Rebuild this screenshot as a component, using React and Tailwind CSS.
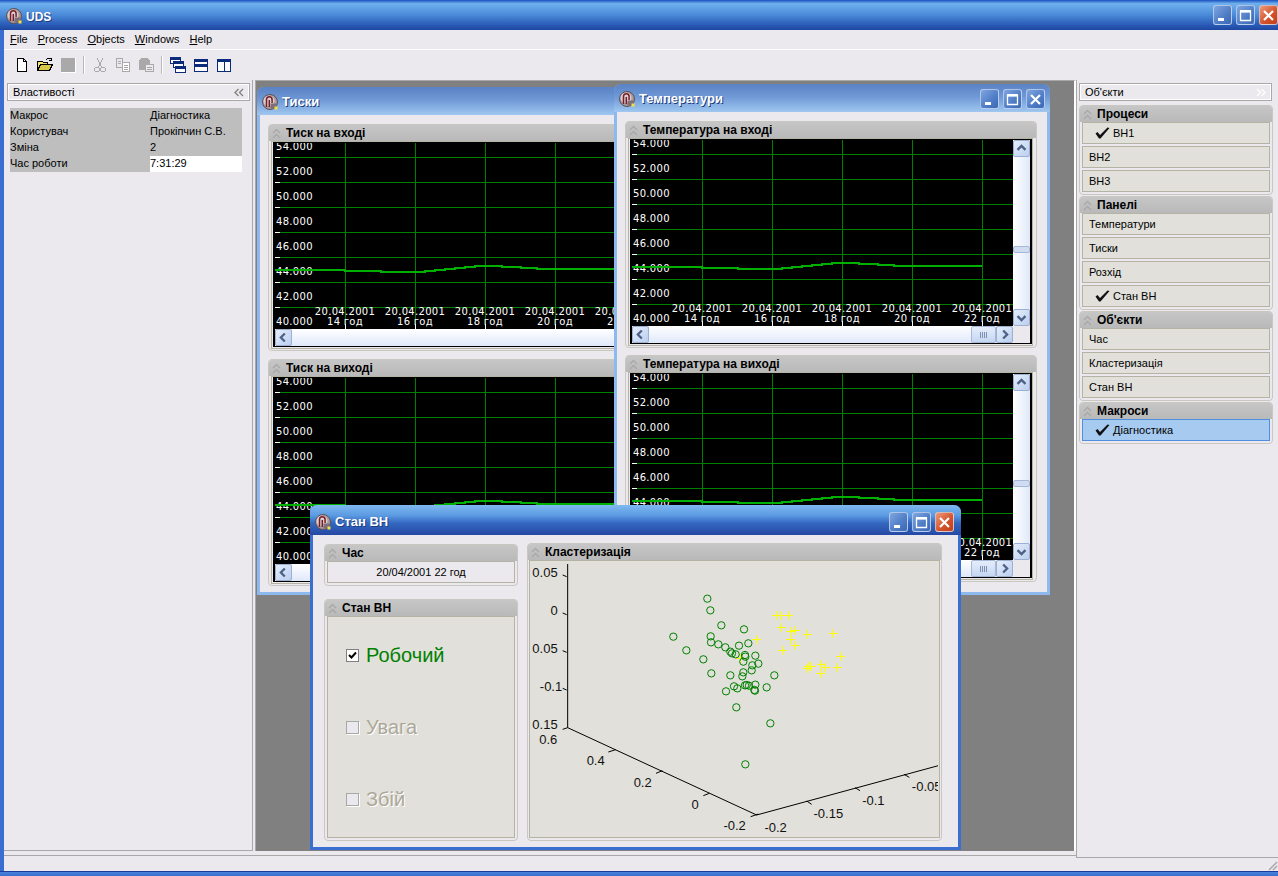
import React from 'react'

const yLabels = ['54.000', '52.000', '50.000', '48.000', '46.000', '44.000', '42.000', '40.000']
const gridY = [14, 39, 64, 89, 114, 139, 164]
const gridX = [70, 140, 210, 280, 350]
const hours = ['14', '16', '18', '20', '22']
const trend = '0,127 70,127 70,128 106,128 106,129 150,129 150,128 160,128 160,127 170,127 170,126 180,126 180,125 190,125 190,124 200,124 200,123 227,123 227,124 246,124 246,125 262,125 262,126 350,126'

const circles = [[547,176],[556,211],[589,256],[657,268],[445,290],[557,289],[558,307],[580,313],[601,322],[642,317],[670,310],[484,331],[616,335],[621,340],[632,343],[660,345],[661,350],[691,347],[535,358],[655,365],[682,376],[700,371],[680,391],[655,397],[652,409],[559,400],[616,406],[748,406],[627,439],[637,445],[603,454],[660,436],[665,435],[672,437],[691,434],[725,442],[688,450],[690,452],[634,502],[736,550],[661,673]]
const pluses = [[755,226],[768,226],[790,226],[768,263],[797,275],[810,270],[848,284],[925,280],[797,298],[811,315],[772,331],[693,298],[945,349],[848,385],[851,380],[858,378],[888,373],[900,382],[936,382],[886,400],[645,355]]
const plotTicks = [[113,105,125,110],[113,219,125,224],[113,332,125,337],[113,445,125,450],[113,568,128,563],[250,636,272,629],[393,700,412,692],[535,767,553,760],[677,830,700,822],[845,783,860,793],[990,743,1005,752],[1137,703,1153,712]]
const plotLabels = [['0.05',60,111],['0',87,225],['0.05',60,339],['-0.1',78,452],['0.15',60,566],['0.6',70,611],['0.4',212,674],['0.2',353,740],['0',510,806],['-0.2',629,869],['-0.2',752,875],['-0.15',910,834],['-0.1',1045,794],['-0.05',1205,754]]

const objectGroups = [
    { title: 'Процеси', items: [{ name: 'ВН1', checked: true }, { name: 'ВН2' }, { name: 'ВН3' }] },
    { title: 'Панелі', items: [{ name: 'Температури' }, { name: 'Тиски' }, { name: 'Розхід' }, { name: 'Стан ВН', checked: true }] },
    { title: "Об'єкти", items: [{ name: 'Час' }, { name: 'Кластеризація' }, { name: 'Стан ВН' }] },
    { title: 'Макроси', items: [{ name: 'Діагностика', checked: true, selected: true }] },
]

// plot coords are 3x screen pixels, snap so a 1px stroke stays sharp
const snapX = x => Math.round((x - 16.5) / 3) * 3 + 16.5
const snapY = y => Math.round((y - 64.5) / 3) * 3 + 64.5

const Logo = () => (
    <svg width="16" height="16" viewBox="0 0 16 16" className="shrink-0">
        <circle cx="8" cy="8" r="7.5" fill="#a89a9a" stroke="#5e5054" />
        <circle cx="7" cy="7" r="5.5" fill="#d8d0d0" />
        <path d="M4.500 13V5.500a2.800 2.800 0 0 1 5.600 0V9M7.300 13V6" fill="none" stroke="#7a1b2a" strokeWidth="1.500" />
        <rect x="8.500" y="9.500" width="6" height="5" fill="#7d6f78" />
        <rect x="12.500" y="12.500" width="3" height="3" fill="#f5e040" />
    </svg>
)

const TitleBtn = ({ kind, tone }) => {
    const toneClass = tone === 'red'
        ? 'bg-[linear-gradient(135deg,#ee9a78,#d2502a_60%,#c04018)]'
        : 'bg-[linear-gradient(135deg,#7fa6e0,#4f7cc6_60%,#3c68b4)]'
    return (
        <div className={`w-[19px] h-[20px] rounded-[3px] border border-[#dce6f6]/70 flex items-center justify-center shrink-0 ${toneClass}`}>
            <svg width="13" height="13" viewBox="0 0 13 13">
                {kind === 'min' && <rect x="2" y="9" width="6" height="3" fill="#fff" />}
                {kind === 'max' && <path d="M1.500 2.500h10v9h-10zM1.500 2.500h10" fill="none" stroke="#fff" strokeWidth="1.300" />}
                {kind === 'max' && <rect x="1" y="1" width="11" height="2.500" fill="#fff" />}
                {kind === 'close' && <path d="M2 2l9 9M11 2l-9 9" stroke="#fff" strokeWidth="2.200" />}
            </svg>
        </div>
    )
}

const Chevrons = ({ color = '#a8a8a8' }) => (
    <svg width="9" height="11" viewBox="0 0 9 11" className="shrink-0">
        <path d="M1 5l3.500-3.500L8 5M1 10l3.500-3.500L8 10" fill="none" stroke={color} strokeWidth="1.300" />
    </svg>
)

const SideChevrons = ({ left, color }) => (
    <svg width="10" height="9" viewBox="0 0 10 9" className="shrink-0">
        <path d={left ? 'M4.500 1L1 4.500 4.500 8M9 1L5.500 4.500 9 8' : 'M1 1l3.500 3.500L1 8M5.500 1L9 4.500 5.500 8'} fill="none" stroke={color} strokeWidth="1.300" />
    </svg>
)

const Tick = ({ size = 20 }) => (
    <svg width={size} height={size * 0.8} viewBox="0 0 15 12" className="shrink-0">
        <path d="M0.500 6.500l2-1.500 2.500 3L12.500 0.500l2 0.500L5.500 11.500h-1.500z" fill="#111" />
    </svg>
)

const Panel = ({ title, className, children }) => (
    <div className={`rounded-[4px] border border-[#c8c7c0] bg-[#ebe9ed] flex flex-col ${className}`}>
        <div className="h-[16px] rounded-t-[3px] bg-[linear-gradient(#c6c6c6,#b9b9b9)] flex items-center gap-[5px] pl-[3px] shrink-0">
            <Chevrons />
            <span className="text-[12px] font-bold text-black leading-none">{title}</span>
        </div>
        {children}
    </div>
)

const ScrollBtn = ({ dir }) => {
    const paths = {
        up: 'M4 10l4.500-4.500L13 10',
        down: 'M4 7l4.500 4.500L13 7',
        left: 'M10 4L5.500 8.500 10 13',
        right: 'M7 4l4.500 4.500L7 13',
    }
    return (
        <div className="w-[17px] h-[17px] shrink-0 rounded-[2px] border border-[#9db0d0] bg-[linear-gradient(135deg,#e4edfb,#bccff0)]">
            <svg width="15" height="15" viewBox="0 0 17 17">
                <path d={paths[dir]} fill="none" stroke="#4d6185" strokeWidth="2.600" />
            </svg>
        </div>
    )
}

const Chart = () => (
    <svg width="381" height="186" className="block bg-black shrink-0" shapeRendering="crispEdges">
        {gridY.map(y => (
            <g key={y}>
                <rect x="5" y={y} width="376" height="1" fill="#008000" />
                <rect x="0" y={y} width="5" height="1" fill="#fff" />
            </g>
        ))}
        {gridX.map(x => (
            <g key={x}>
                <rect x={x} y="0" width="1" height="181" fill="#008000" />
                <rect x={x} y="181" width="1" height="5" fill="#fff" />
            </g>
        ))}
        <g shapeRendering="auto">
            {yLabels.map((label, i) => (
                <text key={label} x="1" y={6.5 + i * 25} className="fill-white text-[10px] tracking-[0.3px] font-['DejaVu_Sans',sans-serif]">{label}</text>
            ))}
            {gridX.map(x => (
                <text key={x} x={x} y="171.5" textAnchor="middle" className="fill-white text-[10px] tracking-[0.3px] font-['DejaVu_Sans',sans-serif]">20.04.2001</text>
            ))}
            {gridX.map((x, i) => (
                <text key={x} x={x} y="181.5" textAnchor="middle" className="fill-white text-[10px] tracking-[0.3px] font-['DejaVu_Sans',sans-serif]">{hours[i]} год</text>
            ))}
        </g>
        <polyline points={trend} fill="none" stroke="#00b000" strokeWidth="2" />
    </svg>
)

const ChartPanel = ({ title, className }) => (
    <Panel title={title} className={`w-[412px] h-[227px] shrink-0 ${className}`}>
        <div className="ml-[2px] mr-[3px] border border-[#b5b3a3] pl-px pb-px">
            <div className="border-x-2 border-y border-black flex flex-col w-[402px]">
                <div className="flex">
                    <Chart />
                    <div className="w-[17px] h-[186px] flex flex-col justify-between relative bg-[linear-gradient(90deg,#fff,#dfe8fa)]">
                        <ScrollBtn dir="up" />
                        <div className="absolute left-0 top-[106px] w-[17px] h-[7px] rounded-[2px] border border-[#a6b8d6] bg-[#cfdcf2]" />
                        <ScrollBtn dir="down" />
                    </div>
                </div>
                <div className="flex h-[17px]">
                    <ScrollBtn dir="left" />
                    <div className="flex-1 flex justify-end bg-[linear-gradient(#fff,#dfe8fa)]">
                        <div className="w-[25px] h-[17px] rounded-[2px] border border-[#a6b8d6] bg-[linear-gradient(#e4edfb,#c6d6f2)] flex items-center justify-center gap-px">
                            <span className="w-px h-[6px] bg-[#7f90ae]" />
                            <span className="w-px h-[6px] bg-[#7f90ae]" />
                            <span className="w-px h-[6px] bg-[#7f90ae]" />
                            <span className="w-px h-[6px] bg-[#7f90ae]" />
                        </div>
                    </div>
                    <ScrollBtn dir="right" />
                    <div className="w-[17px] bg-[#ebe9ed]" />
                </div>
            </div>
        </div>
    </Panel>
)

const MdiWindow = ({ title, active, className, children }) => {
    const frame = active ? 'border-[#3a6ed0]' : 'border-[#8db9ef]'
    const bar = active
        ? 'h-[30px] pt-[4px] pr-[7px] bg-[linear-gradient(#7fb9ef,#5b9ae2_35%,#3468c0_60%,#2448a4)]'
        : 'h-[28px] pt-[2px] pr-[5px] bg-[linear-gradient(#5a82c4,#6f98d6_45%,#9fc7f0)]'
    return (
        <div className={`absolute border-x-[3px] border-b-[3px] rounded-t-[7px] flex flex-col ${frame} ${className}`}>
            <div className={`shrink-0 -mx-[3px] pl-[5px] rounded-t-[7px] flex items-center gap-[4px] ${bar}`}>
                <Logo />
                <span className="text-[13px] font-bold text-white flex-1 [text-shadow:1px_1px_0_#1e3c80]">{title}</span>
                <div className="flex gap-[4px]">
                    <TitleBtn kind="min" />
                    <TitleBtn kind="max" />
                    <TitleBtn kind="close" tone={active ? 'red' : undefined} />
                </div>
            </div>
            <div className="flex-1 bg-[#ebe9ed] min-h-0">{children}</div>
        </div>
    )
}

const Checkbox = ({ label, checked }) => (
    <div className="h-[24px] flex items-center gap-[7px]">
        <div className={`w-[13px] h-[13px] flex items-center justify-center border ${checked ? 'bg-white border-[#808080]' : 'bg-[#ebe9ed] border-[#a8a8a8] [box-shadow:1px_1px_0_#fff]'}`}>
            {checked && (
                <svg width="9" height="9" viewBox="0 0 9 9">
                    <path d="M1 4l2.500 2.500L8 1.500" fill="none" stroke="#000" strokeWidth="2" />
                </svg>
            )}
        </div>
        <span className={`text-[20px] ${checked ? 'text-[#008000]' : 'text-[#aca899] [text-shadow:1px_1px_0_#fff]'}`}>{label}</span>
    </div>
)

const ClusterPlot = () => (
    <svg width="408" height="276" viewBox="15 63 1224 828" className="block overflow-hidden">
        <path d="M128 72V563L695 825 1240 677" fill="none" stroke="#000" strokeWidth="3" />
        {plotTicks.map(([x1, y1, x2, y2]) => (
            <line key={`${x1}-${y1}`} x1={x1} y1={y1} x2={x2} y2={y2} stroke="#000" strokeWidth="3" />
        ))}
        {plotLabels.map(([text, x, y]) => (
            <text key={`${text}-${x}`} x={x} y={y} textAnchor="middle" className="fill-[#111] text-[39px]">{text}</text>
        ))}
        {pluses.map(([x, y]) => (
            <path key={`${x}-${y}`} d={`M${snapX(x) - 13.5} ${snapY(y)}h27M${snapX(x)} ${snapY(y) - 13.5}v27`} stroke="#ffff00" strokeWidth="3" />
        ))}
        {circles.map(([x, y]) => (
            <circle key={`${x}-${y}`} cx={x} cy={y} r="11" fill="none" stroke="#008000" strokeWidth="3" />
        ))}
    </svg>
)

const ToolIcon = ({ children }) => (
    <svg width="16" height="16" viewBox="0 0 16 16" className="shrink-0" shapeRendering="crispEdges">{children}</svg>
)

const Toolbar = () => (
    <div className="h-[30px] shrink-0 flex items-center gap-[7px] pl-[10px]">
        <ToolIcon><path d="M3.500 1.500h6l3 3v10h-9z" fill="#fff" stroke="#000" /><path d="M9.500 1.500v3h3" fill="none" stroke="#000" /></ToolIcon>
        <ToolIcon>
            <path d="M0.500 13.500v-9h5l1 1h4v2h-7l-3 6z" fill="#f2e870" stroke="#000" />
            <path d="M0.500 13.500l3-6h12l-3 6z" fill="#d8c848" stroke="#000" />
            <path d="M9 3c2-2 4-2 5.500-0.500M14.500 0.500v2.500h-2.500" fill="none" stroke="#000" />
        </ToolIcon>
        <ToolIcon><rect x="1" y="1" width="14" height="14" fill="#a9a9a9" /><path d="M15 1h1v15H1v-1h14z" fill="#fff" /></ToolIcon>
        <div className="w-[2px] h-[18px] bg-[#b8b8b8] border-r border-white" />
        <ToolIcon>
            <path d="M5 1l4.500 9M11 1L6.500 10" fill="none" stroke="#a9a9a9" />
            <circle cx="5" cy="12.500" r="2.500" fill="none" stroke="#a9a9a9" />
            <circle cx="11" cy="12.500" r="2.500" fill="none" stroke="#a9a9a9" />
        </ToolIcon>
        <ToolIcon>
            <path d="M1.500 1.500h6v9h-6z" fill="#ebe9ed" stroke="#a9a9a9" />
            <path d="M7.500 5.500h7v9h-7z" fill="#fff" stroke="#a9a9a9" />
            <path d="M9 8h4M9 10h4M9 12h4M3 4h3M3 6h3" stroke="#a9a9a9" />
        </ToolIcon>
        <ToolIcon>
            <path d="M1 4q0-2 3-3h5q3 1 3 3v9H1z" fill="#a9a9a9" />
            <path d="M7.500 7.500h8v7h-8z" fill="#ebe9ed" stroke="#a9a9a9" />
            <path d="M9 10h5M9 12h5" stroke="#a9a9a9" />
        </ToolIcon>
        <div className="w-[2px] h-[18px] bg-[#b8b8b8] border-r border-white" />
        <ToolIcon>
            <path d="M0.500 0.500h10v6h-10z" fill="#fff" stroke="#0a2a7a" />
            <rect x="0" y="0" width="11" height="3" fill="#0a2a7a" />
            <path d="M3.500 4.500h10v6h-10z" fill="#fff" stroke="#0a2a7a" />
            <rect x="3" y="4" width="11" height="3" fill="#0a2a7a" />
            <path d="M5.500 9.500h10v6h-10z" fill="#fff" stroke="#0a2a7a" />
            <rect x="5" y="9" width="11" height="3" fill="#0a2a7a" />
        </ToolIcon>
        <ToolIcon>
            <path d="M1.500 2.500h13v12h-13z" fill="#fff" stroke="#0a2a7a" />
            <rect x="1" y="2" width="14" height="3" fill="#0a2a7a" />
            <rect x="1" y="7" width="14" height="3" fill="#0a2a7a" />
        </ToolIcon>
        <ToolIcon>
            <path d="M1.500 2.500h13v12h-13zM8 2.500v12" fill="#fff" stroke="#0a2a7a" />
            <rect x="1" y="2" width="14" height="3" fill="#0a2a7a" />
        </ToolIcon>
    </div>
)

const SideHeader = ({ title, icon }) => (
    <div className="h-[18px] border border-[#a8a8a8] shadow-[inset_0_0_0_1px_#fff] flex items-center justify-between px-[5px] shrink-0">
        <span className="text-[11px] text-black">{title}</span>
        {icon}
    </div>
)

const PropertiesPanel = () => {
    const rows = [
        ['Макрос', 'Діагностика'],
        ['Користувач', 'Прокіпчин С.В.'],
        ['Зміна', '2'],
    ]
    return (
        <div className="w-[249px] shrink-0 border-r border-b border-[#a8a8a8] pt-[3px] pl-[3px] pr-[2px]">
            <SideHeader title="Властивості" icon={<SideChevrons left color="#808080" />} />
            <div className="mt-[7px] ml-[3px] w-[232px] grid grid-cols-[140px_92px] text-[11px] leading-[15px] auto-rows-[16px] bg-[#bebebe] text-black">
                {rows.map(([key, value]) => (
                    <React.Fragment key={key}>
                        <div>{key}</div>
                        <div>{value}</div>
                    </React.Fragment>
                ))}
                <div>Час роботи</div>
                <div className="bg-white">7:31:29</div>
            </div>
        </div>
    )
}

const ObjectsPanel = () => (
    <div className="w-[202px] shrink-0 flex flex-col">
        <div className="h-[778px] border-l border-b border-[#a8a8a8] pt-[3px] pl-[2px] flex flex-col">
            <div className="w-[193px]">
                <SideHeader title="Об'єкти" icon={<SideChevrons color="#ffffff" />} />
            </div>
            <div className="mt-[4px] w-[194px] flex flex-col gap-px">
                {objectGroups.map(group => (
                    <Panel key={group.title} title={group.title} className="pb-[2px]">
                        <div className="mx-[2px] flex flex-col gap-[2px]">
                            {group.items.map(item => (
                                <div key={item.name} className={`h-[22px] border flex items-center text-[11px] text-black ${item.selected ? 'bg-[#a6caf0] border-[#4f8fe0]' : 'bg-[#e1e0da] border-[#b5b3a3]'} ${item.checked ? 'pl-[12px] gap-[3px]' : 'pl-[6px]'}`}>
                                    {item.checked && <Tick size={15} />}
                                    {item.name}
                                </div>
                            ))}
                        </div>
                    </Panel>
                ))}
            </div>
        </div>
        <div className="flex-1 flex justify-end items-end">
            <svg width="12" height="12" viewBox="0 0 12 12">
                <path d="M11 3L3 11M11 7l-4 4" stroke="#a8a8a8" strokeWidth="1.500" />
            </svg>
        </div>
    </div>
)

const App = () => (
    <div className="w-[1278px] h-[876px] overflow-hidden flex flex-col bg-[#ebe9ed] font-['Liberation_Sans',Arial,sans-serif]">
        <div className="h-[30px] shrink-0 flex items-center pl-[6px] pt-[2px] gap-[4px] bg-[linear-gradient(#1a50c0,#6fb0ee_12%,#4a8ad8_50%,#2a5cb8_82%,#1e46a0)]">
            <Logo />
            <span className="text-[12px] font-bold text-white flex-1 pt-px [text-shadow:1px_1px_0_#1e3c80]">UDS</span>
            <div className="flex gap-[4px] -mt-[2px]">
                <TitleBtn kind="min" />
                <TitleBtn kind="max" />
                <TitleBtn kind="close" tone="red" />
            </div>
        </div>
        <div className="flex-1 min-h-0 flex flex-col border-l-4 border-[#3a6ed0]">
            <div className="h-[20px] shrink-0 flex items-center gap-[10px] pl-[6px] text-[11px] text-black border-b border-white">
                <span><u>F</u>ile</span>
                <span><u>P</u>rocess</span>
                <span><u>O</u>bjects</span>
                <span><u>W</u>indows</span>
                <span><u>H</u>elp</span>
            </div>
            <Toolbar />
            <div className="flex-1 min-h-0 flex">
                <div className="flex-1 min-w-0 flex flex-col">
                    <div className="h-[771px] shrink-0 flex">
                        <PropertiesPanel />
                        <div className="relative overflow-hidden ml-[2px] flex-1 bg-[#808080] border-t border-l border-[#a8a8a8] border-r-2 border-r-white">
                            <MdiWindow title="Тиски" className="left-[1px] top-[6px] w-[436px] h-[508px]">
                                <div className="pl-[8px] pt-[9px] flex flex-col gap-[8px]">
                                    <ChartPanel title="Тиск на вході" />
                                    <ChartPanel title="Тиск на виході" />
                                </div>
                            </MdiWindow>
                            <MdiWindow title="Температури" className="left-[358px] top-[3px] w-[436px] h-[511px]">
                                <div className="pl-[8px] pt-[9px] flex flex-col gap-[7px]">
                                    <ChartPanel title="Температура на вході" />
                                    <ChartPanel title="Температура на виході" />
                                </div>
                            </MdiWindow>
                            <MdiWindow active title="Стан ВН" className="left-[54px] top-[424px] w-[651px] h-[345px]">
                                <div className="h-full pl-[11px] pt-[9px] flex gap-[9px]">
                                    <div className="w-[194px] flex flex-col gap-[13px]">
                                        <Panel title="Час" className="h-[42px]">
                                            <div className="mx-[2px] h-[22px] border border-[#b5b3a3] flex items-center justify-center text-[11px] text-black">20/04/2001 22 год</div>
                                        </Panel>
                                        <Panel title="Стан ВН" className="h-[242px]">
                                            <div className="mx-[2px] h-[222px] border border-[#b5b3a3] bg-[#e1e0da] pl-[18px] pt-[26px] flex flex-col gap-[48px]">
                                                <Checkbox checked label="Робочий" />
                                                <Checkbox label="Увага" />
                                                <Checkbox label="Збій" />
                                            </div>
                                        </Panel>
                                    </div>
                                    <Panel title="Кластеризація" className="w-[415px] h-[298px] -mt-px">
                                        <div className="mx-px h-[278px] border border-[#b5b3a3] bg-[#e1e0da]">
                                            <ClusterPlot />
                                        </div>
                                    </Panel>
                                </div>
                            </MdiWindow>
                        </div>
                    </div>
                    <div className="mt-[4px] flex-1 border-t border-[#a8a8a8]" />
                </div>
                <ObjectsPanel />
            </div>
        </div>
        <div className="h-[5px] shrink-0 bg-[linear-gradient(#1c3c9c_20%,#4a82dc_20%,#3a6ed0)]" />
    </div>
)

export default App
